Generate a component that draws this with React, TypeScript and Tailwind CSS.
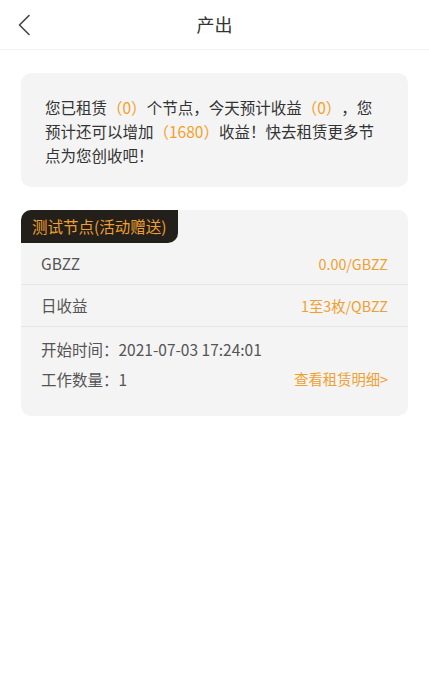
import React from "react";

export default function App() {
  const font = { fontFamily: '"Noto Sans CJK SC", "Noto Sans", sans-serif' };
  return (
    <div className="min-h-[691px] w-full bg-white text-[#333] [text-spacing-trim:space-all]" style={font}>
      <header className="grid h-[50px] grid-cols-[60px_1fr_60px] items-center border-b border-[#efeff2]">
        <div className="flex items-center pl-[17px]">
          <svg width="14" height="22" viewBox="0 0 14 22" fill="none">
            <path d="M12 1.5 L2.5 11 L12 20.5" stroke="#444" strokeWidth="1.6" strokeLinecap="round" strokeLinejoin="round" />
          </svg>
        </div>
        <div className="text-center text-[18px] text-[#333]">产出</div>
        <div />
      </header>

      <main className="px-[21px] pt-[23px]">
        <section className="rounded-[10px] bg-[#f4f4f4] pb-[20px] pl-[24px] pr-[22px] pt-[22px] text-[15.5px] leading-[24px] text-[#333]">
          您已租赁<span className="text-[#f5a028]">（0）</span>个节点，今天预计收益<span className="text-[#f5a028]">（0）</span>，您预计还可以增加<span className="text-[#f5a028]">（1680）</span>收益！快去租赁更多节点为您创收吧！
        </section>

        <section className="mt-[23px] overflow-hidden rounded-[10px] bg-[#f4f4f4] text-[15.5px] text-[#555]">
          <div className="flex">
            <div className="flex h-[33px] items-center rounded-br-[10px] bg-[#231f1a] pl-[11px] pr-[12px] text-[#f0a030]">
              测试节点(活动赠送)
            </div>
          </div>
          <div className="flex h-[42px] items-center justify-between border-b border-[#e6e6e6] px-[20px]">
            <span>GBZZ</span>
            <span className="text-[14.3px] text-[#f0a030]">0.00/GBZZ</span>
          </div>
          <div className="flex h-[42px] items-center justify-between border-b border-[#e6e6e6] px-[20px]">
            <span>日收益</span>
            <span className="text-[14.3px] text-[#f0a030]">1至3枚/QBZZ</span>
          </div>
          <div className="flex flex-col gap-[6px] px-[20px] pb-[25px] pt-[10px] leading-[24px]">
            <div>开始时间：2021-07-03 17:24:01</div>
            <div className="flex items-center justify-between">
              <span>工作数量：1</span>
              <span className="text-[14.3px] text-[#f0a030]">查看租赁明细&gt;</span>
            </div>
          </div>
        </section>
      </main>
    </div>
  );
}
